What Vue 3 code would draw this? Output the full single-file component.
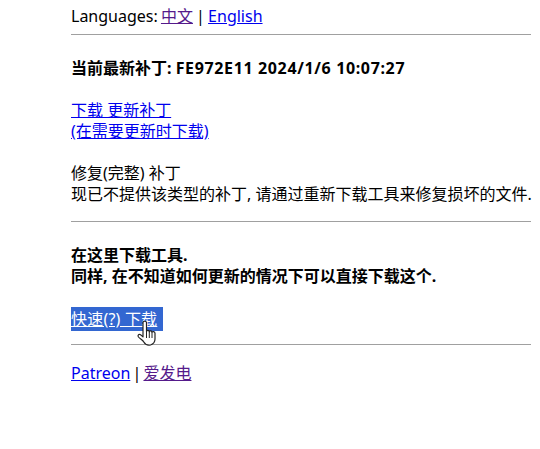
<template>
  <div class="page">
    <div class="lang">
      Languages: <a class="visited" href="#">中文</a> | <a href="#">English</a>
    </div>
    <hr />
    <p class="title"><b>当前最新补丁: <span class="wide">FE972E11 2024/1/6 10:07:27</span></b></p>
    <p>
      <a href="#">下载 更新补丁</a><br />
      <a href="#">(在需要更新时下载)</a>
    </p>
    <p class="repair">
      修复(完整) 补丁<br />
      现已不提供该类型的补丁, 请通过重新下载工具来修复损坏的文件.
    </p>
    <hr />
    <p class="title">
      <b>在这里下载工具.<br />同样, 在不知道如何更新的情况下可以直接下载这个.</b>
    </p>
    <p class="quick">
      <a class="hover" href="#">快速(?) 下载</a>
      <!-- 手形光标 -->
      <svg class="cursor" width="20" height="26" viewBox="0 0 20 26">
        <path
          d="M6 13V2.500C6 .8 9.500 .8 9.500 2.500V11.500C9.500 10 12.300 10 12.300 11.800C12.300 10.500 15 10.500 15 12.300C15 11.300 18 11.300 18 13.300V19C18 22 16.500 24 13.500 25C10 25.500 7.800 24 6.800 22C5.800 20 3 19 1.500 17C.5 15.500 1.500 14 3 14.500C4 15 5 16 6 16.800Z"
          fill="#fff"
          stroke="#222"
          stroke-width="1.200"
          stroke-linejoin="round"
        />
        <path d="M9.500 11.500V18M12.300 11.800V18M15 12.300V18" stroke="#222" stroke-width="1" fill="none" />
      </svg>
    </p>
    <hr />
    <div class="foot">
      <a href="#">Patreon</a> | <a class="visited" href="#">爱发电</a>
    </div>
  </div>
</template>

<script setup>
</script>

<style>
html,
body {
  background: #fff;
}
</style>

<style scoped>
.page {
  width: 460px;
  margin-left: 71px;
  padding-top: 6px;
  font-family: "Noto Sans", "Noto Sans CJK SC", sans-serif;
  font-size: 16px;
  line-height: 21px;
  color: #000;
}

a {
  color: #0000ee;
}

a.visited {
  color: #551a8b;
}

.lang {
  word-spacing: -1px;
}

hr {
  height: 1px;
  margin: 7px 0 0;
  border: 0;
  background: #a0a0a0;
}

p {
  margin: 21px 0 0;
}

p.title {
  margin-top: 23px;
}

.wide {
  letter-spacing: 0.64px;
}

.repair {
  white-space: nowrap;
}

.quick {
  position: relative;
  margin-top: 22px;
}

p + hr {
  margin-top: 16px;
}

.quick + hr {
  margin-top: 14px;
}

a.hover {
  padding: 1px 6px 1px 0;
  color: #fff;
  background: #3367d1;
  letter-spacing: 0.2px;
}

.cursor {
  position: absolute;
  left: 66px;
  top: 11px;
}

.foot {
  margin-top: 18px;
  word-spacing: -2px;
}
</style>
